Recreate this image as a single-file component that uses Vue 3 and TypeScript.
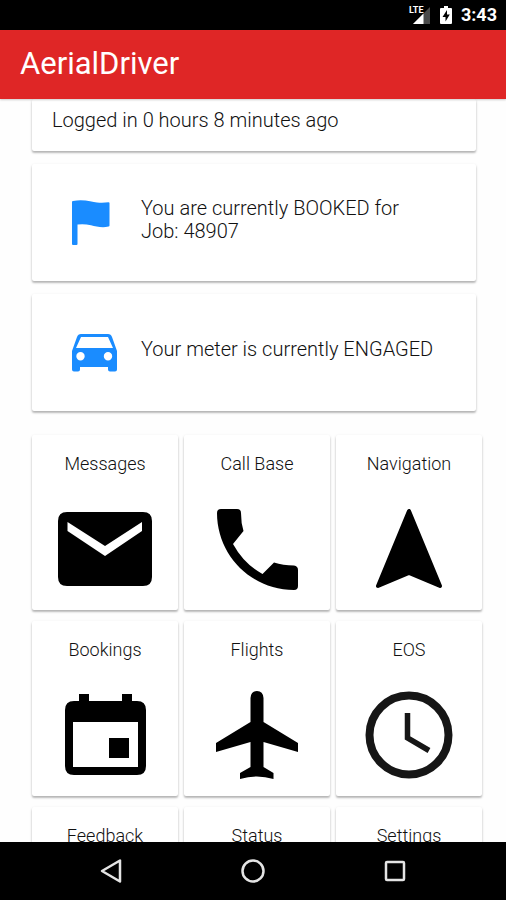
<script setup lang="ts">
interface Tile {
  label: string
  width: number
  height: number
  icon: 'mail' | 'phone' | 'navigation' | 'calendar' | 'plane' | 'clock' | 'none'
}

const tiles: Tile[] = [
  { label: 'Messages', icon: 'mail', width: 94, height: 74 },
  { label: 'Call Base', icon: 'phone', width: 81, height: 81 },
  { label: 'Navigation', icon: 'navigation', width: 68, height: 80 },
  { label: 'Bookings', icon: 'calendar', width: 81, height: 82 },
  { label: 'Flights', icon: 'plane', width: 82, height: 88 },
  { label: 'EOS', icon: 'clock', width: 88, height: 88 },
  { label: 'Feedback', icon: 'none', width: 0, height: 0 },
  { label: 'Status', icon: 'none', width: 0, height: 0 },
  { label: 'Settings', icon: 'none', width: 0, height: 0 },
]
</script>

<template>
  <div class="screen">
    <div class="status-bar">
      <div class="signal">
        <span class="network">LTE</span>
        <svg width="18" height="17" viewBox="0 0 18 17" aria-hidden="true">
          <path d="M18 0v17H1z" fill="#4a4a4a" />
          <path d="M11.500 6.500V17H1z" fill="#fff" />
        </svg>
      </div>
      <svg class="battery" width="12" height="18" viewBox="0 0 12 18" aria-hidden="true">
        <path d="M4 0h4v2h3q1 0 1 1v14q0 1-1 1H1q-1 0-1-1V3q0-1 1-1h3z" fill="#fff" />
        <path d="M7 4L2.500 11H5.500V15.500L9.800 8.500H7z" fill="#000" />
      </svg>
      <time class="time">3:43</time>
    </div>

    <header class="app-bar">
      <h1>AerialDriver</h1>
    </header>

    <main class="content">
      <section class="card session">
        <p>Logged in 0 hours 8 minutes ago</p>
      </section>

      <section class="card notice">
        <div class="notice-icon">
          <svg width="38" height="46" viewBox="0 0 38 46" aria-hidden="true">
            <path d="M0 2Q0 1 1 1C12-1 20 2 25 2.500Q31 3 36.500 2.300Q37.500 2.300 37.500 3V25.500Q37.500 26.500 36.500 26.600C30 28 24 26.500 19 25.300Q12 23.500 5.500 24.500V44Q5.500 45 4.500 45H1Q0 45 0 44z" fill="#1a8cff" />
          </svg>
        </div>
        <p>You are currently BOOKED for Job: 48907</p>
      </section>

      <section class="card notice single">
        <div class="notice-icon">
          <svg width="45" height="38" viewBox="0 0 45 38" aria-hidden="true">
            <path fill-rule="evenodd" fill="#1a8cff" d="M9 0H36Q39 0 40 3L45 17V35.500Q45 37.500 43 37.500H38Q36 37.500 36 35.500V33H8V35.500Q8 37.500 6 37.500H2Q0 37.500 0 35.500V17L5 3Q6 0 9 0zM9 3L4 14H41L36 3zM8.500 18a4.200 4.200 0 1 0 0 8.400a4.200 4.200 0 1 0 0-8.400zM36 18a4.200 4.200 0 1 0 0 8.400a4.200 4.200 0 1 0 0-8.400z" />
          </svg>
        </div>
        <p>Your meter is currently ENGAGED</p>
      </section>

      <nav class="tiles" aria-label="Main menu">
        <button v-for="tile in tiles" :key="tile.label" class="card tile" type="button">
          <span class="tile-label">{{ tile.label }}</span>
          <span class="tile-icon">
            <svg
              v-if="tile.icon !== 'none'"
              :width="tile.width"
              :height="tile.height"
              :viewBox="`0 0 ${tile.width} ${tile.height}`"
              aria-hidden="true"
            >
              <path v-if="tile.icon === 'mail'" fill-rule="evenodd" d="M9 0H85Q94 0 94 9V65Q94 74 85 74H9Q0 74 0 65V9Q0 0 9 0zM9.500 10V19L47 44L84 19V10L47 34z" />
              <path v-else-if="tile.icon === 'phone'" d="M4 0H20Q24 0 24 4Q24 14 26.500 22L16 35Q27 55 45.500 65L57 53.500Q66 56.500 77 56.500Q81 57 81 61V77Q81 81 77 81C34 81 0 46 0 4Q0 0 4 0z" />
              <path v-else-if="tile.icon === 'navigation'" d="M34 2L3 77L34 64L65 77z" stroke="#000" stroke-width="4" stroke-linejoin="round" />
              <path v-else-if="tile.icon === 'calendar'" fill-rule="evenodd" d="M14 0H24V7H57V0H67V7H72Q81 7 81 16V72Q81 81 72 81H9Q0 81 0 72V16Q0 7 9 7H14zM8 28V73H73V28zM44 44H64V64H44z" />
              <path v-else-if="tile.icon === 'plane'" d="M34.500 7Q35 0 41 0Q47 0 47.500 7V31L82 52V61L47.500 51V76L57.500 82V88Q41 83 24 88V82L34.500 76V51L0 61V52L34.500 31z" />
              <g v-else fill="none" stroke="#161616">
                <circle cx="44" cy="44" r="39.500" stroke-width="8" />
                <path d="M42.500 22V47L64 59.500" stroke-width="5.500" />
              </g>
            </svg>
          </span>
        </button>
      </nav>
    </main>

    <footer class="system-bar">
      <button type="button" aria-label="Back">
        <svg width="24" height="26" viewBox="0 0 24 26" aria-hidden="true">
          <path d="M21 2.500V23.500L3 13z" />
        </svg>
      </button>
      <button type="button" aria-label="Home">
        <svg width="26" height="26" viewBox="0 0 26 26" aria-hidden="true">
          <circle cx="13" cy="13" r="10.500" />
        </svg>
      </button>
      <button type="button" aria-label="Recent apps">
        <svg width="24" height="24" viewBox="0 0 24 24" aria-hidden="true">
          <rect x="3" y="3" width="18" height="18" rx="1" />
        </svg>
      </button>
    </footer>
  </div>
</template>

<style>
body {
  margin: 0;
}
</style>

<style scoped>
.screen {
  display: flex;
  flex-direction: column;
  height: 100vh;
  background: #fefefe;
  color: #111;
  font-family: Roboto, "Liberation Sans", sans-serif;
}

h1,
p {
  margin: 0;
  font-weight: inherit;
}

button {
  margin: 0;
  padding: 0;
  border: 0;
  color: inherit;
  font: inherit;
}

.status-bar {
  display: flex;
  flex: none;
  align-items: center;
  justify-content: flex-end;
  height: 30px;
  padding-right: 9px;
  background: #000;
  color: #fff;
}

.signal {
  position: relative;
  display: flex;
  margin-right: 10px;
}

.network {
  position: absolute;
  top: -2px;
  left: -3px;
  font-size: 9px;
  font-weight: 700;
  line-height: 10px;
}

.battery {
  margin-right: 9px;
}

.time {
  font-size: 18px;
  font-weight: 700;
  line-height: 32px;
}

.app-bar {
  position: relative;
  display: flex;
  flex: none;
  align-items: center;
  height: 69px;
  padding: 0 20px;
  background: #df2626;
  color: #fff;
  box-shadow: 0 1px 2px rgba(0, 0, 0, 0.2);
}

.app-bar h1 {
  padding-bottom: 2px;
  font-size: 31px;
  line-height: 36px;
}

.content {
  display: flex;
  flex: 1;
  flex-direction: column;
  min-height: 0;
  padding: 0 24px 0 32px;
  overflow: hidden;
  font-weight: 300;
}

.card {
  flex: none;
  border-radius: 2px;
  background: #fff;
  box-shadow: 0 2px 2px rgba(0, 0, 0, 0.22), 0 1px 3px rgba(0, 0, 0, 0.12);
}

.session,
.notice {
  margin: 0 6px 13px 0;
  font-size: 20px;
  line-height: 23px;
}

.session {
  padding: 10px 20px 19px;
}

.notice {
  display: flex;
  align-items: center;
  min-height: 117px;
  padding: 0 20px 0 40px;
}

.notice p {
  max-width: 296px;
  padding-bottom: 6px;
}

.notice-icon {
  display: flex;
  flex: none;
  width: 69px;
}

.tiles {
  display: grid;
  flex: none;
  grid-template-columns: repeat(3, 1fr);
  gap: 11px 6px;
  margin-top: 11px;
}

.tile {
  display: flex;
  flex-direction: column;
  align-items: center;
  height: 175px;
  padding-top: 17px;
}

.tile-label {
  font-size: 18px;
  line-height: 24px;
}

.tile-icon {
  display: flex;
  align-items: center;
  justify-content: center;
  height: 88px;
  margin-top: 29px;
}

.system-bar {
  display: grid;
  flex: none;
  grid-template-columns: repeat(3, 1fr);
  height: 58px;
  padding: 0 40px;
  background: #000;
}

.system-bar button {
  display: flex;
  align-items: center;
  justify-content: center;
  background: transparent;
}

.system-bar svg {
  fill: none;
  stroke: #e4e4e4;
  stroke-width: 2.500;
  stroke-linejoin: round;
}
</style>
